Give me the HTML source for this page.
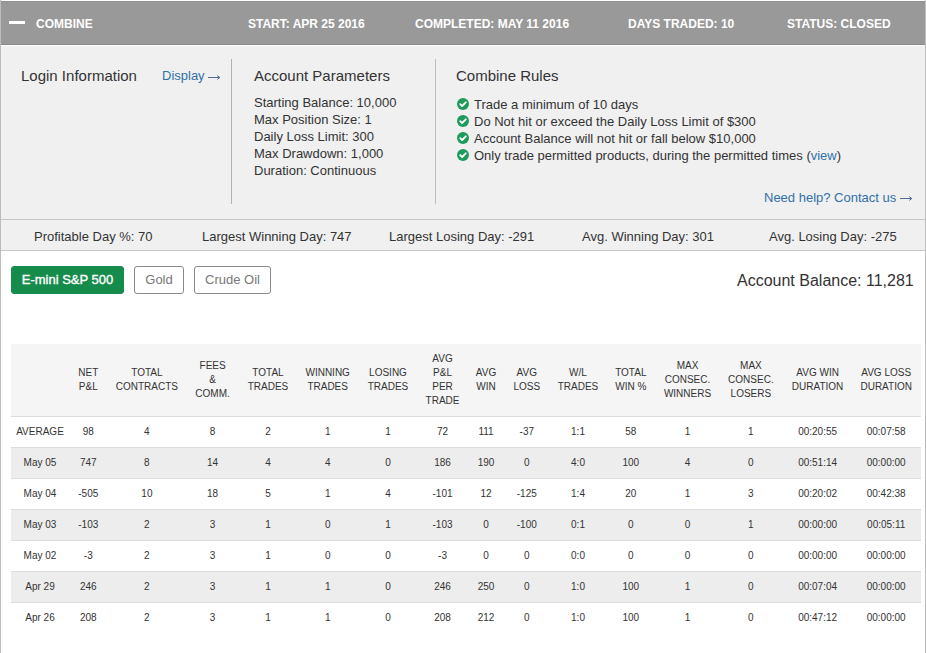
<!DOCTYPE html>
<html><head><meta charset="utf-8">
<style>
html,body{margin:0;padding:0;}
body{width:926px;height:653px;overflow:hidden;background:#fff;position:relative;font-family:"Liberation Sans",sans-serif;color:#333;}
.a{position:absolute;white-space:nowrap;}
#lb{left:0;top:0;width:1px;height:653px;background:#bcbcbc;}
#rb{left:925px;top:0;width:1px;height:653px;background:#bcbcbc;}
#hdr{left:1px;top:1px;width:924px;height:42px;background:#999;border-top:1px solid #8f8f8f;border-bottom:1px solid #888;}
#hdr .t{color:#fff;font-weight:bold;font-size:12px;line-height:14px;top:15px;}
#dash{left:8px;top:19px;width:16px;height:3px;background:#fff;}
#panel{left:1px;top:46px;width:924px;height:173px;background:#f0f0f0;}
.h15{font-size:15px;line-height:17px;}
.t13{font-size:13px;line-height:17px;}
.link{color:#3070aa;}
.vsep{width:1px;background:#bdbdbd;}
.hline{left:1px;width:924px;height:1px;background:#c6c6c6;}
#stats{left:1px;top:220px;width:924px;height:30px;background:#f0f0f0;}
.btn{top:266px;height:26px;border:1px solid #8a8a8a;border-radius:3px;font-size:13px;line-height:25px;color:#777;text-align:center;box-sizing:content-box;}
.chk{width:12px;height:12px;}
#thead{left:11px;top:344px;width:910px;height:72px;background:#f5f5f5;}
.row{left:11px;width:910px;height:30px;border-top:1px solid #dcdcdc;}
.row.s{background:#ededed;}
.c{position:absolute;font-size:10px;line-height:14px;text-align:center;white-space:nowrap;transform:translateX(-50%);}
</style></head><body>
<div class="a" id="lb"></div>
<div class="a" id="rb"></div>
<div class="a" id="hdr">
  <div class="a" id="dash"></div>
  <div class="a t" style="left:35px">COMBINE</div>
  <div class="a t" style="left:247px">START: APR 25 2016</div>
  <div class="a t" style="left:414px">COMPLETED: MAY 11 2016</div>
  <div class="a t" style="left:627px">DAYS TRADED: 10</div>
  <div class="a t" style="left:786px">STATUS: CLOSED</div>
</div>
<div class="a" id="panel"></div>
<div class="a h15" style="left:21px;top:67px">Login Information</div>
<div class="a t13 link" style="left:162px;top:67px">Display</div><svg style="position:absolute;left:208px;top:74px" width="13" height="7" viewBox="0 0 13 7"><path d="M0 3.5H11.5" stroke="#55689a" stroke-width="1"/><path d="M9.3 1.6L11.8 3.5L9.3 5.4" stroke="#55689a" stroke-width="1" fill="none"/></svg>
<div class="a vsep" style="left:231px;top:59px;height:145px;background:#b2b2b2"></div>
<div class="a h15" style="left:254px;top:67px">Account Parameters</div>
<div class="a t13" style="left:254px;top:94px">Starting Balance: 10,000</div>
<div class="a t13" style="left:254px;top:111px">Max Position Size: 1</div>
<div class="a t13" style="left:254px;top:128px">Daily Loss Limit: 300</div>
<div class="a t13" style="left:254px;top:145px">Max Drawdown: 1,000</div>
<div class="a t13" style="left:254px;top:162px">Duration: Continuous</div>
<div class="a vsep" style="left:435px;top:59px;height:145px"></div>
<div class="a h15" style="left:456px;top:67px">Combine Rules</div>
<svg class="a chk" style="left:457px;top:98px" viewBox="0 0 12 12" width="12" height="12"><circle cx="6" cy="6" r="6" fill="#1f9a5c"/><path d="M3.2 6.2 L5.1 8 L8.8 4.3" stroke="#fff" stroke-width="1.8" fill="none" stroke-linecap="round" stroke-linejoin="round"/></svg><div class="a t13" style="left:474px;top:96px">Trade a minimum of 10 days</div>
<svg class="a chk" style="left:457px;top:115px" viewBox="0 0 12 12" width="12" height="12"><circle cx="6" cy="6" r="6" fill="#1f9a5c"/><path d="M3.2 6.2 L5.1 8 L8.8 4.3" stroke="#fff" stroke-width="1.8" fill="none" stroke-linecap="round" stroke-linejoin="round"/></svg><div class="a t13" style="left:474px;top:113px">Do Not hit or exceed the Daily Loss Limit of $300</div>
<svg class="a chk" style="left:457px;top:132px" viewBox="0 0 12 12" width="12" height="12"><circle cx="6" cy="6" r="6" fill="#1f9a5c"/><path d="M3.2 6.2 L5.1 8 L8.8 4.3" stroke="#fff" stroke-width="1.8" fill="none" stroke-linecap="round" stroke-linejoin="round"/></svg><div class="a t13" style="left:474px;top:130px">Account Balance will not hit or fall below $10,000</div>
<svg class="a chk" style="left:457px;top:149px" viewBox="0 0 12 12" width="12" height="12"><circle cx="6" cy="6" r="6" fill="#1f9a5c"/><path d="M3.2 6.2 L5.1 8 L8.8 4.3" stroke="#fff" stroke-width="1.8" fill="none" stroke-linecap="round" stroke-linejoin="round"/></svg><div class="a t13" style="left:474px;top:147px">Only trade permitted products, during the permitted times (<span class="link">view</span>)</div>

<div class="a t13 link" style="left:764px;top:189px">Need help? Contact us</div><svg style="position:absolute;left:900px;top:195px" width="13" height="7" viewBox="0 0 13 7"><path d="M0 3.5H11.5" stroke="#55689a" stroke-width="1"/><path d="M9.3 1.6L11.8 3.5L9.3 5.4" stroke="#55689a" stroke-width="1" fill="none"/></svg>
<div class="a hline" style="top:219px"></div>
<div class="a" id="stats"></div>
<div class="a hline" style="top:250px"></div>
<div class="a t13" style="left:34px;top:228px">Profitable Day %: 70</div>
<div class="a t13" style="left:202px;top:228px">Largest Winning Day: 747</div>
<div class="a t13" style="left:389px;top:228px">Largest Losing Day: -291</div>
<div class="a t13" style="left:582px;top:228px">Avg. Winning Day: 301</div>
<div class="a t13" style="left:769px;top:228px">Avg. Losing Day: -275</div>
<div class="a btn" style="left:11px;width:111px;background:#168c4c;border-color:#168c4c;color:#fff;-webkit-text-stroke:0.35px #fff">E-mini S&amp;P 500</div>
<div class="a btn" style="left:134px;width:48px">Gold</div>
<div class="a btn" style="left:194px;width:75px">Crude Oil</div>
<div class="a" style="left:737px;top:272px;font-size:16px;line-height:18px">Account Balance: 11,281</div>
<div class="a" id="thead"></div>
<div class="c" style="left:40px;top:373.0px"></div>
<div class="c" style="left:88.25px;top:366.0px">NET<br>P&amp;L</div>
<div class="c" style="left:146.9px;top:366.0px">TOTAL<br>CONTRACTS</div>
<div class="c" style="left:212.6px;top:359.0px">FEES<br>&amp;<br>COMM.</div>
<div class="c" style="left:268px;top:366.0px">TOTAL<br>TRADES</div>
<div class="c" style="left:327.7px;top:366.0px">WINNING<br>TRADES</div>
<div class="c" style="left:388px;top:366.0px">LOSING<br>TRADES</div>
<div class="c" style="left:442.5px;top:352.0px">AVG<br>P&amp;L<br>PER<br>TRADE</div>
<div class="c" style="left:486px;top:366.0px">AVG<br>WIN</div>
<div class="c" style="left:526.8px;top:366.0px">AVG<br>LOSS</div>
<div class="c" style="left:578px;top:366.0px">W/L<br>TRADES</div>
<div class="c" style="left:630.8px;top:366.0px">TOTAL<br>WIN %</div>
<div class="c" style="left:687.5px;top:359.0px">MAX<br>CONSEC.<br>WINNERS</div>
<div class="c" style="left:750.9px;top:359.0px">MAX<br>CONSEC.<br>LOSERS</div>
<div class="c" style="left:817.6px;top:366.0px">AVG WIN<br>DURATION</div>
<div class="c" style="left:886.2px;top:366.0px">AVG LOSS<br>DURATION</div>
<div class="a row" style="top:416px"></div>
<div class="c" style="left:40px;top:425px">AVERAGE</div>
<div class="c" style="left:88.25px;top:425px">98</div>
<div class="c" style="left:146.9px;top:425px">4</div>
<div class="c" style="left:212.6px;top:425px">8</div>
<div class="c" style="left:268px;top:425px">2</div>
<div class="c" style="left:327.7px;top:425px">1</div>
<div class="c" style="left:388px;top:425px">1</div>
<div class="c" style="left:442.5px;top:425px">72</div>
<div class="c" style="left:486px;top:425px">111</div>
<div class="c" style="left:526.8px;top:425px">-37</div>
<div class="c" style="left:578px;top:425px">1:1</div>
<div class="c" style="left:630.8px;top:425px">58</div>
<div class="c" style="left:687.5px;top:425px">1</div>
<div class="c" style="left:750.9px;top:425px">1</div>
<div class="c" style="left:817.6px;top:425px">00:20:55</div>
<div class="c" style="left:886.2px;top:425px">00:07:58</div>
<div class="a row s" style="top:447px"></div>
<div class="c" style="left:40px;top:456px">May 05</div>
<div class="c" style="left:88.25px;top:456px">747</div>
<div class="c" style="left:146.9px;top:456px">8</div>
<div class="c" style="left:212.6px;top:456px">14</div>
<div class="c" style="left:268px;top:456px">4</div>
<div class="c" style="left:327.7px;top:456px">4</div>
<div class="c" style="left:388px;top:456px">0</div>
<div class="c" style="left:442.5px;top:456px">186</div>
<div class="c" style="left:486px;top:456px">190</div>
<div class="c" style="left:526.8px;top:456px">0</div>
<div class="c" style="left:578px;top:456px">4:0</div>
<div class="c" style="left:630.8px;top:456px">100</div>
<div class="c" style="left:687.5px;top:456px">4</div>
<div class="c" style="left:750.9px;top:456px">0</div>
<div class="c" style="left:817.6px;top:456px">00:51:14</div>
<div class="c" style="left:886.2px;top:456px">00:00:00</div>
<div class="a row" style="top:478px"></div>
<div class="c" style="left:40px;top:487px">May 04</div>
<div class="c" style="left:88.25px;top:487px">-505</div>
<div class="c" style="left:146.9px;top:487px">10</div>
<div class="c" style="left:212.6px;top:487px">18</div>
<div class="c" style="left:268px;top:487px">5</div>
<div class="c" style="left:327.7px;top:487px">1</div>
<div class="c" style="left:388px;top:487px">4</div>
<div class="c" style="left:442.5px;top:487px">-101</div>
<div class="c" style="left:486px;top:487px">12</div>
<div class="c" style="left:526.8px;top:487px">-125</div>
<div class="c" style="left:578px;top:487px">1:4</div>
<div class="c" style="left:630.8px;top:487px">20</div>
<div class="c" style="left:687.5px;top:487px">1</div>
<div class="c" style="left:750.9px;top:487px">3</div>
<div class="c" style="left:817.6px;top:487px">00:20:02</div>
<div class="c" style="left:886.2px;top:487px">00:42:38</div>
<div class="a row s" style="top:509px"></div>
<div class="c" style="left:40px;top:518px">May 03</div>
<div class="c" style="left:88.25px;top:518px">-103</div>
<div class="c" style="left:146.9px;top:518px">2</div>
<div class="c" style="left:212.6px;top:518px">3</div>
<div class="c" style="left:268px;top:518px">1</div>
<div class="c" style="left:327.7px;top:518px">0</div>
<div class="c" style="left:388px;top:518px">1</div>
<div class="c" style="left:442.5px;top:518px">-103</div>
<div class="c" style="left:486px;top:518px">0</div>
<div class="c" style="left:526.8px;top:518px">-100</div>
<div class="c" style="left:578px;top:518px">0:1</div>
<div class="c" style="left:630.8px;top:518px">0</div>
<div class="c" style="left:687.5px;top:518px">0</div>
<div class="c" style="left:750.9px;top:518px">1</div>
<div class="c" style="left:817.6px;top:518px">00:00:00</div>
<div class="c" style="left:886.2px;top:518px">00:05:11</div>
<div class="a row" style="top:540px"></div>
<div class="c" style="left:40px;top:549px">May 02</div>
<div class="c" style="left:88.25px;top:549px">-3</div>
<div class="c" style="left:146.9px;top:549px">2</div>
<div class="c" style="left:212.6px;top:549px">3</div>
<div class="c" style="left:268px;top:549px">1</div>
<div class="c" style="left:327.7px;top:549px">0</div>
<div class="c" style="left:388px;top:549px">0</div>
<div class="c" style="left:442.5px;top:549px">-3</div>
<div class="c" style="left:486px;top:549px">0</div>
<div class="c" style="left:526.8px;top:549px">0</div>
<div class="c" style="left:578px;top:549px">0:0</div>
<div class="c" style="left:630.8px;top:549px">0</div>
<div class="c" style="left:687.5px;top:549px">0</div>
<div class="c" style="left:750.9px;top:549px">0</div>
<div class="c" style="left:817.6px;top:549px">00:00:00</div>
<div class="c" style="left:886.2px;top:549px">00:00:00</div>
<div class="a row s" style="top:571px"></div>
<div class="c" style="left:40px;top:580px">Apr 29</div>
<div class="c" style="left:88.25px;top:580px">246</div>
<div class="c" style="left:146.9px;top:580px">2</div>
<div class="c" style="left:212.6px;top:580px">3</div>
<div class="c" style="left:268px;top:580px">1</div>
<div class="c" style="left:327.7px;top:580px">1</div>
<div class="c" style="left:388px;top:580px">0</div>
<div class="c" style="left:442.5px;top:580px">246</div>
<div class="c" style="left:486px;top:580px">250</div>
<div class="c" style="left:526.8px;top:580px">0</div>
<div class="c" style="left:578px;top:580px">1:0</div>
<div class="c" style="left:630.8px;top:580px">100</div>
<div class="c" style="left:687.5px;top:580px">1</div>
<div class="c" style="left:750.9px;top:580px">0</div>
<div class="c" style="left:817.6px;top:580px">00:07:04</div>
<div class="c" style="left:886.2px;top:580px">00:00:00</div>
<div class="a row" style="top:602px"></div>
<div class="c" style="left:40px;top:611px">Apr 26</div>
<div class="c" style="left:88.25px;top:611px">208</div>
<div class="c" style="left:146.9px;top:611px">2</div>
<div class="c" style="left:212.6px;top:611px">3</div>
<div class="c" style="left:268px;top:611px">1</div>
<div class="c" style="left:327.7px;top:611px">1</div>
<div class="c" style="left:388px;top:611px">0</div>
<div class="c" style="left:442.5px;top:611px">208</div>
<div class="c" style="left:486px;top:611px">212</div>
<div class="c" style="left:526.8px;top:611px">0</div>
<div class="c" style="left:578px;top:611px">1:0</div>
<div class="c" style="left:630.8px;top:611px">100</div>
<div class="c" style="left:687.5px;top:611px">1</div>
<div class="c" style="left:750.9px;top:611px">0</div>
<div class="c" style="left:817.6px;top:611px">00:47:12</div>
<div class="c" style="left:886.2px;top:611px">00:00:00</div>

</body></html>
